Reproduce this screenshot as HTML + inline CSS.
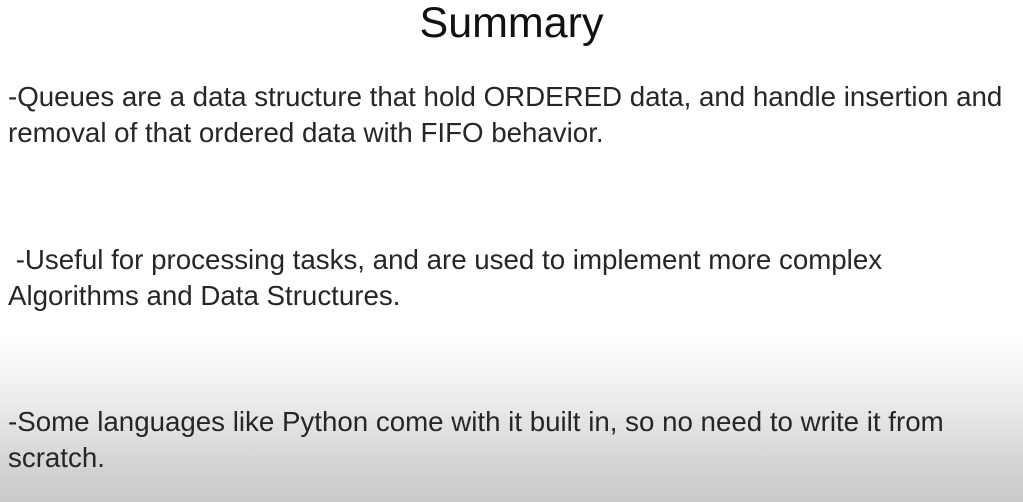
<!DOCTYPE html>
<html><head><meta charset="utf-8"><style>
html,body{margin:0;padding:0}
body{width:1023px;height:502px;overflow:hidden;position:relative;
background:linear-gradient(to bottom,#fff 0,#fff 335px,#ececec 400px,#d6d6d6 460px,#c9c9c9 502px);
font-family:"Liberation Sans",sans-serif;color:#262626}
.t{position:absolute;white-space:nowrap;font-size:27.7px;line-height:32px}
h1{position:absolute;margin:0;top:0;left:0;width:1023px;text-align:center;font-weight:normal;font-size:43px;color:#111;line-height:46px}
</style></head><body>
<h1>Summary</h1>
<div class="t" style="left:8px;top:81px">-Queues are a data structure that hold ORDERED data, and handle insertion and</div>
<div class="t" style="left:8px;top:117px">removal of that ordered data with FIFO behavior.</div>
<div class="t" style="left:8px;top:244px">&nbsp;-Useful for processing tasks, and are used to implement more complex</div>
<div class="t" style="left:8px;top:280px">Algorithms and Data Structures.</div>
<div class="t" style="left:8px;top:406px">-Some languages like Python come with it built in, so no need to write it from</div>
<div class="t" style="left:8px;top:442px">scratch.</div>
</body></html>
